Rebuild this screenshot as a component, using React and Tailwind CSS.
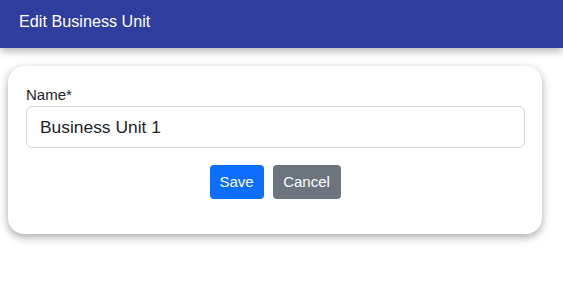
import React, { useState } from 'react';

const App = () => {
  const [name, setName] = useState('Business Unit 1');

  return (
    <div className="min-h-screen bg-white" style={{ fontFamily: '"Liberation Sans", Arial, sans-serif' }}>
      {/* Header */}
      <div className="relative z-10 h-12 bg-[#2f3e9e] px-[19px] pt-[9px] shadow-[0_3px_8px_rgba(0,0,0,0.3)]">
        <h1 className="text-[16.2px] leading-6 text-white">Edit Business Unit</h1>
      </div>

      {/* Form card */}
      <div className="mt-[18px] ml-2 w-[534px] h-[168px] rounded-2xl bg-white px-[18px] pt-[18px] shadow-[0_3px_8px_rgba(0,0,0,0.35)]">
        <label className="block text-[15px] leading-[22px] text-[#212529]">Name*</label>
        <input
          value={name}
          onChange={(e) => setName(e.target.value)}
          className="block w-[499px] h-[42px] rounded-md border border-[#ced4da] px-[13px] text-[17.4px] text-[#212529] outline-none"
        />
        <div className="mt-[17px] flex justify-center gap-[9px]">
          <button className="h-[34px] w-[54px] rounded bg-[#0d6efd] text-[15px] text-white">Save</button>
          <button className="h-[34px] w-[68px] rounded bg-[#6c757d] text-[15px] text-white">Cancel</button>
        </div>
      </div>
    </div>
  );
};

export default App;
